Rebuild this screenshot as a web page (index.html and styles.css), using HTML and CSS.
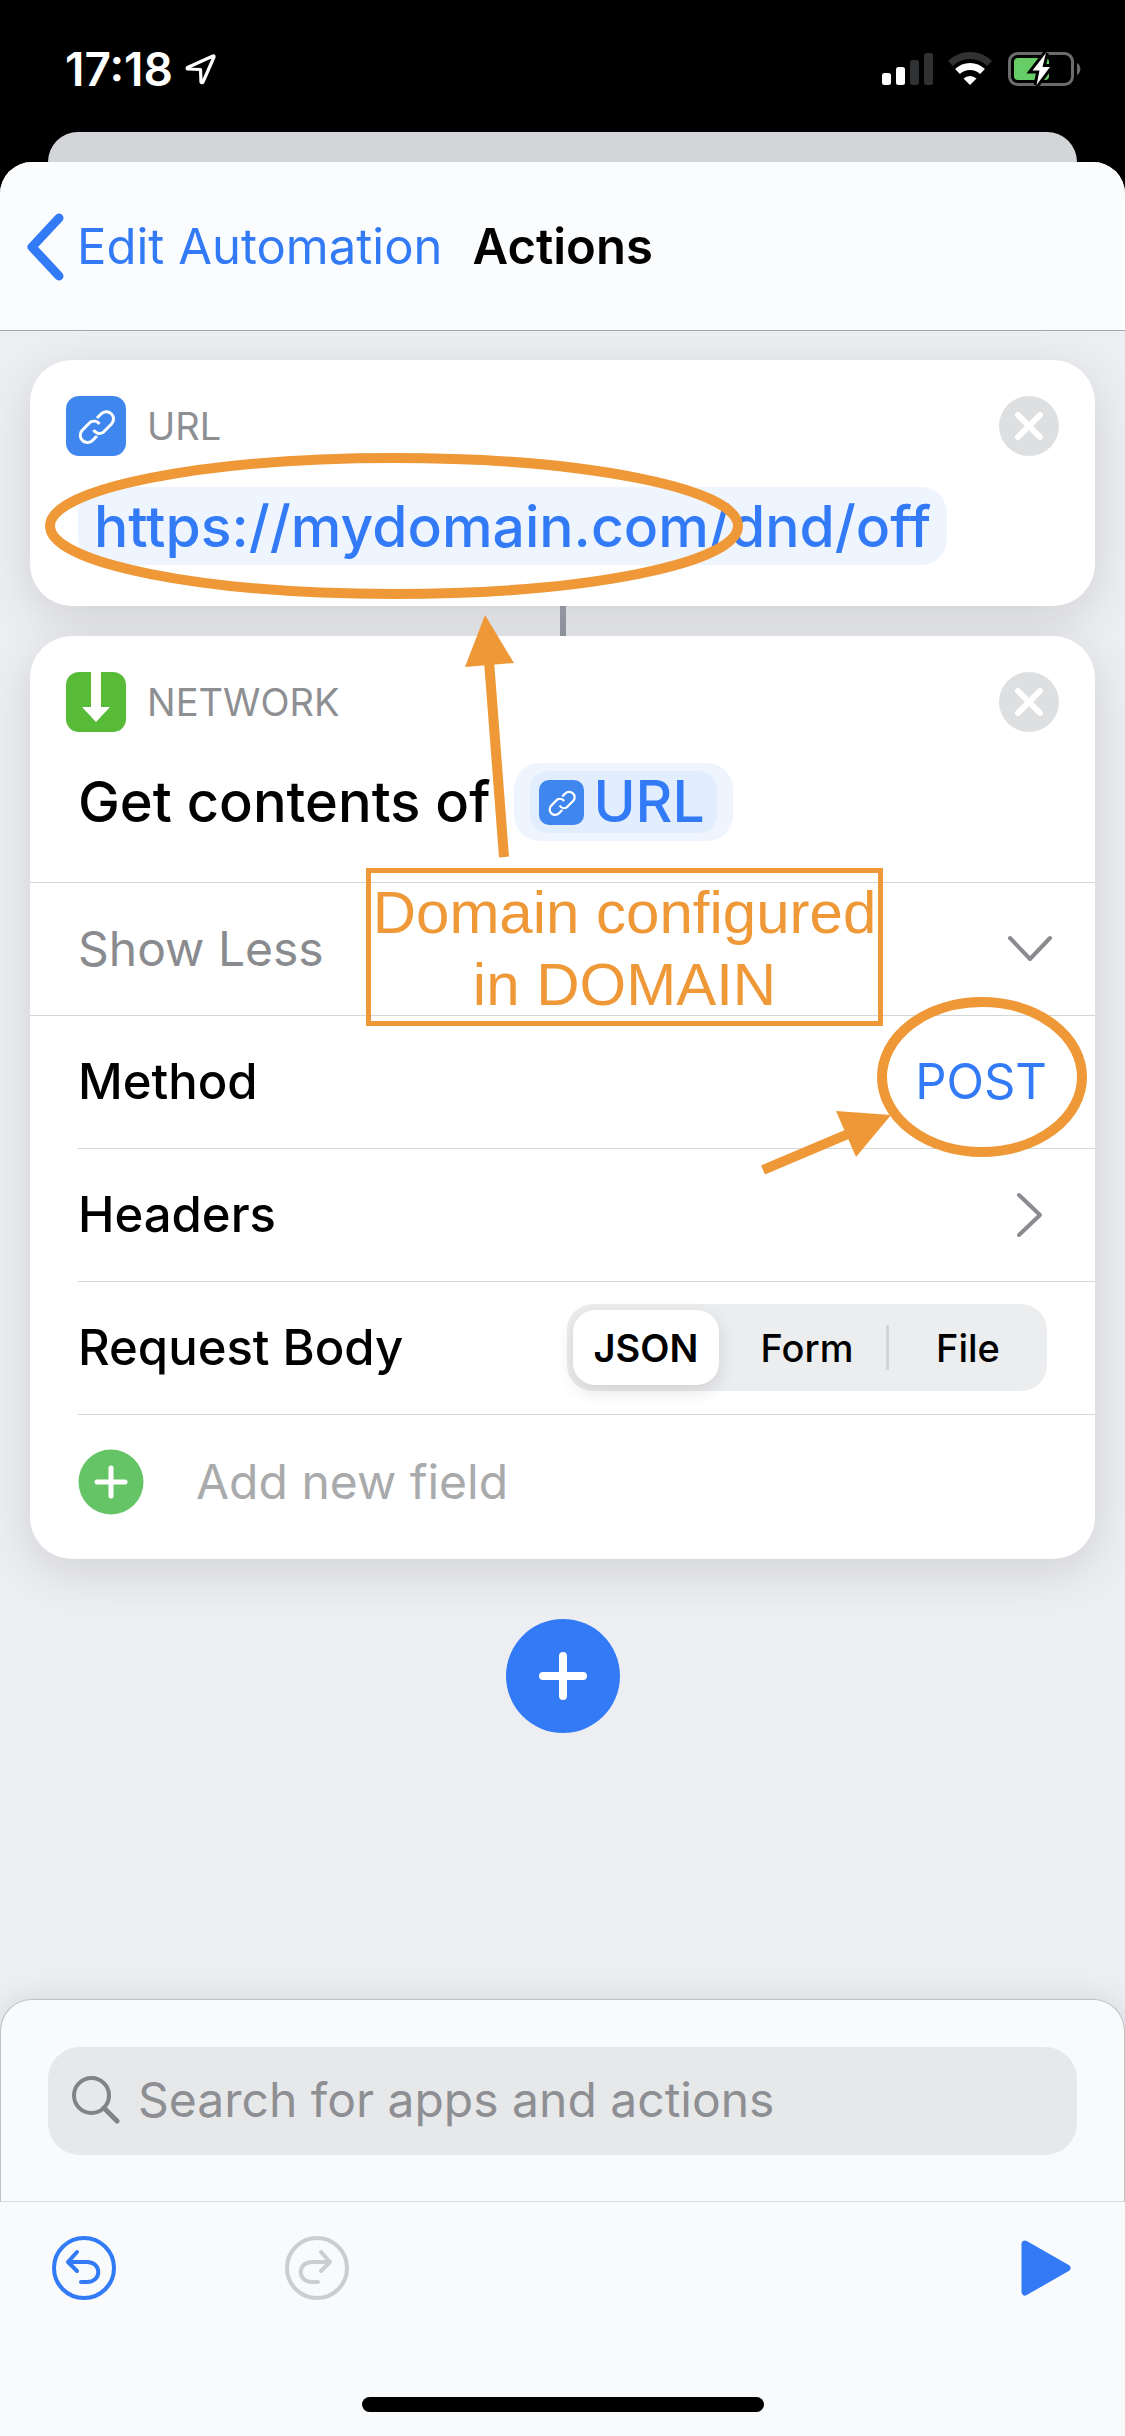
FILE: index.html
```html
<!DOCTYPE html>
<html lang="en">
<head>
<meta charset="utf-8">
<meta name="viewport" content="width=device-width, initial-scale=1">
<title>Actions</title>
<link rel="stylesheet" href="styles.css">
</head>
<body>
<svg class="defs" aria-hidden="true">
  <symbol id="link" viewBox="0 0 60 60">
    <g fill="none" stroke="#fff" stroke-width="3" stroke-linecap="butt">
      <path d="M31 22 L35 18 A7 7 0 0 1 45.500 28 L37 36.500 A7 7 0 0 1 27.500 34"/>
      <path d="M31 40 L27 44 A7 7 0 0 1 16 34.500 L24.500 26 A7 7 0 0 1 33.500 28"/>
    </g>
  </symbol>
  <symbol id="close" viewBox="0 0 60 60">
    <circle cx="30" cy="30" r="30" fill="#dedfe1"/>
    <path d="M19 19 L41 41 M41 19 L19 41" stroke="#fff" stroke-width="6" stroke-linecap="round"/>
  </symbol>
</svg>

<div class="status">
  <div class="status-left">
    <time>17:18</time>
    <svg width="32" height="32" viewBox="0 0 32 32" aria-hidden="true"><path d="M28 3 L2.500 14.500 Q1.500 16 3 16 L15.500 16.500 L16 29 Q17 30.500 18 29 L29 4 Q29.300 2.800 28 3 Z" fill="none" stroke="#fff" stroke-width="3.200" stroke-linejoin="round"/></svg>
  </div>
  <svg width="202" height="36" viewBox="0 0 202 36" role="img" aria-label="Signal, Wi-Fi and battery">
    <rect x="1" y="22" width="9" height="12" rx="2.500" fill="#fff"/>
    <rect x="15" y="16" width="9" height="18" rx="2.500" fill="#fff"/>
    <rect x="29" y="9" width="9" height="25" rx="2.500" fill="#303133"/>
    <rect x="43" y="2" width="9" height="32" rx="2.500" fill="#303133"/>
    <path d="M69.500 12.500 A28 28 0 0 1 108.500 12.500" fill="none" stroke="#303133" stroke-width="7"/>
    <path d="M76.500 20.500 A18 18 0 0 1 101.500 20.500" fill="none" stroke="#fff" stroke-width="7"/>
    <path d="M82.500 27.500 A9.500 9.500 0 0 1 95.500 27.500 L89 34 Z" fill="#fff"/>
    <rect x="128.500" y="2.500" width="63" height="31" rx="8" fill="none" stroke="#6c6c6e" stroke-width="3"/>
    <path d="M196 12 A7 7 0 0 1 196 24 Z" fill="#6c6c6e"/>
    <rect x="133" y="7" width="35" height="22" rx="4" fill="#67ce67"/>
    <path d="M165 2 L151.500 19.500 L158.500 19.500 L155.500 34 L169 16 L161.500 16 Z" fill="#fff" stroke="#000" stroke-width="6" paint-order="stroke"/>
  </svg>
</div>
<div class="back-sheet"></div>

<div class="sheet">
  <header class="nav">
    <a class="back" href="#">
      <svg width="38" height="68" viewBox="0 0 38 68" aria-hidden="true"><path d="M33 5 L6 34 L33 63" fill="none" stroke="#337af7" stroke-width="9" stroke-linecap="round" stroke-linejoin="round"/></svg>
      Edit Automation
    </a>
    <h1>Actions</h1>
  </header>

  <main class="flow">
    <section class="card">
      <div class="card-head">
        <svg class="app url-app" viewBox="0 0 60 60" aria-hidden="true"><use href="#link"/></svg>
        <h2>URL</h2>
        <button class="close" aria-label="Remove URL"><svg viewBox="0 0 60 60"><use href="#close"/></svg></button>
      </div>
      <div class="phrase"><span class="token">https://mydomain.com/dnd/off</span></div>
    </section>
    <div class="connector"></div>
    <section class="card">
      <div class="card-head">
        <svg class="app net-app" viewBox="0 0 60 60" aria-hidden="true"><path d="M25 0 H35 V35 H44 L30 50 L16 35 H25 Z" fill="#fff"/></svg>
        <h2>NETWORK</h2>
        <button class="close" aria-label="Remove network action"><svg viewBox="0 0 60 60"><use href="#close"/></svg></button>
      </div>
      <div class="phrase">Get contents of
        <span class="token outer"><span class="variable"><svg class="mini" viewBox="0 0 60 60" aria-hidden="true"><use href="#link"/></svg>URL</span></span>
      </div>
      <button class="row edge muted">Show Less
        <svg width="46" height="28" viewBox="0 0 46 28" aria-hidden="true"><path d="M3 3 L23 24 L43 3" fill="none" stroke="#8a8b8f" stroke-width="4" stroke-linecap="round" stroke-linejoin="round"/></svg>
      </button>
      <div class="row edge"><span>Method</span><button class="value">POST</button></div>
      <a class="row" href="#">Headers
        <svg class="disclosure" width="28" height="46" viewBox="0 0 28 46" aria-hidden="true"><path d="M3 3 L24 23 L3 43" fill="none" stroke="#8a8b8f" stroke-width="4" stroke-linecap="round" stroke-linejoin="round"/></svg>
      </a>
      <div class="row" role="radiogroup" aria-labelledby="body-type">
        <span id="body-type">Request Body</span>
        <div class="segments">
          <label><input type="radio" name="body" checked><span>JSON</span></label>
          <label><input type="radio" name="body"><span>Form</span></label>
          <label class="divided"><input type="radio" name="body"><span>File</span></label>
        </div>
      </div>
      <button class="row add-field">
        <svg width="66" height="66" viewBox="0 0 66 66" aria-hidden="true"><circle cx="33" cy="33" r="32.500" fill="#65c466"/><path d="M33 19 V47 M19 33 H47" stroke="#fff" stroke-width="5" stroke-linecap="round"/></svg>
        Add new field
      </button>
    </section>
    <button class="add" aria-label="Add action">
      <svg width="114" height="114" viewBox="0 0 114 114"><circle cx="57" cy="57" r="57" fill="#337af7"/><path d="M57 37 V77 M37 57 H77" stroke="#fff" stroke-width="8" stroke-linecap="round"/></svg>
    </button>

    <svg class="note-art note-url" width="760" height="540" viewBox="0 0 760 540" aria-hidden="true">
      <ellipse cx="394" cy="195" rx="344" ry="68" fill="none" stroke="#ef9837" stroke-width="10"/>
      <path d="M504 526 L489 330" stroke="#ef9837" stroke-width="10"/>
      <path d="M485 284 L514 332 L465 336 Z" fill="#ef9837"/>
    </svg>
    <p class="note">Domain configured<br>in DOMAIN</p>
    <svg class="note-art note-post" width="365" height="190" viewBox="0 0 365 190" aria-hidden="true">
      <ellipse cx="222" cy="86" rx="100" ry="75" fill="none" stroke="#ef9837" stroke-width="10"/>
      <path d="M3 179 L88 143" stroke="#ef9837" stroke-width="10"/>
      <path d="M131 124 L76 120 L96 166 Z" fill="#ef9837"/>
    </svg>
  </main>

  <footer>
    <form class="search-panel">
      <label class="search">
        <svg width="48" height="50" viewBox="0 0 48 50" aria-hidden="true"><circle cx="19.500" cy="20.500" r="17.500" fill="none" stroke="#828387" stroke-width="4"/><path d="M32 33 L45 46" stroke="#828387" stroke-width="5" stroke-linecap="round"/></svg>
        <input type="search" placeholder="Search for apps and actions" aria-label="Search for apps and actions">
      </label>
    </form>
    <div class="toolbar">
      <button aria-label="Undo"><svg width="66" height="66" viewBox="0 0 66 66"><g fill="none" stroke="#337af7" stroke-width="4" stroke-linecap="round" stroke-linejoin="round"><circle cx="33" cy="33" r="30"/><path d="M26 17 L17 27 L26 36 M17 27 H36 C51 27 51 47 36 47 H30"/></g></svg></button>
      <button aria-label="Redo" disabled><svg width="66" height="66" viewBox="0 0 66 66"><g fill="none" stroke="#cccdcf" stroke-width="4" stroke-linecap="round" stroke-linejoin="round"><circle cx="33" cy="33" r="30"/><path d="M37 17 L46 27 L37 36 M46 27 H28 C13 27 13 47 28 47 H34"/></g></svg></button>
      <button class="play" aria-label="Run"><svg width="50" height="56" viewBox="0 0 50 56"><path d="M4 4 L46 28 L4 52 Z" fill="#337af7" stroke="#337af7" stroke-width="7" stroke-linejoin="round"/></svg></button>
    </div>
    <div class="home"></div>
  </footer>
</div>
</body>
</html>
```
FILE: styles.css
```css
* { box-sizing: border-box; }

body {
  margin: 0;
  min-height: 100vh;
  display: flex;
  flex-direction: column;
  background: #000;
  color: #000;
  font-family: Inter, "Liberation Sans", sans-serif;
  font-size: 49px;
  line-height: 60px;
}

h1, h2, p { margin: 0; font-size: inherit; font-weight: inherit; }
a { color: inherit; text-decoration: none; }
svg { display: block; flex: none; }

button {
  margin: 0;
  padding: 0;
  border: 0;
  background: none;
  color: inherit;
  font: inherit;
  text-align: left;
}

.defs { position: absolute; width: 0; height: 0; }

.status {
  height: 132px;
  padding: 6px 42px 0 65px;
  display: flex;
  align-items: center;
  justify-content: space-between;
  color: #fff;
}
.status-left { display: flex; align-items: center; gap: 12px; font-size: 46px; font-weight: 600; }

.back-sheet {
  height: 60px;
  margin: 0 48px -30px;
  border-radius: 30px 30px 0 0;
  background: #d4d5d9;
}

.sheet {
  position: relative;
  flex: 1;
  display: flex;
  flex-direction: column;
  overflow: hidden;
  border-radius: 32px 32px 0 0;
  background: #edeef2;
}

.nav {
  height: 169px;
  padding: 2px 26px 0;
  display: flex;
  align-items: center;
  gap: 30px;
  border-bottom: 1px solid #a5a7ab;
  background: #fbfcfe;
}
.back { display: flex; align-items: center; gap: 13px; color: #337af7; }
.nav h1 { font-weight: 600; }

.flow {
  position: relative;
  flex: 1;
  display: flex;
  flex-direction: column;
  padding: 29px 30px 60px;
}

.card {
  border-radius: 42px;
  background: #fff;
  box-shadow: 0 12px 48px rgba(0, 0, 0, 0.12);
}

.card-head { display: flex; align-items: center; gap: 21px; padding: 36px 36px 0; }
.card-head h2 { flex: 1; color: #8e8f93; font-size: 38px; }
.app { width: 60px; height: 60px; border-radius: 13px; }
.url-app, .mini { background: #3f86ee; }
.net-app { background: #57bb38; }
.close svg { width: 60px; height: 60px; }

.phrase {
  display: flex;
  align-items: center;
  gap: 24px;
  padding: 31px 48px 41px;
  font-size: 56px;
  font-weight: 500;
}
.token {
  padding: 10px 16px 8px;
  border-radius: 26px;
  background: #eef5fe;
  color: #337af7;
  font-size: 57px;
}
.token.outer { padding: 8px 16px; }
.variable {
  display: flex;
  align-items: center;
  gap: 9px;
  padding: 1px 12px 1px 9px;
  border-radius: 18px;
  background: #e2eefd;
}
.mini { width: 45px; height: 45px; border-radius: 10px; }

.connector { width: 6px; height: 30px; margin: 0 auto; background: #9196a0; }

.row {
  position: relative;
  display: flex;
  align-items: center;
  justify-content: space-between;
  width: 100%;
  height: 133px;
  padding: 0 42px 0 48px;
  font-weight: 500;
}
.row::before {
  content: "";
  position: absolute;
  top: 0;
  left: 48px;
  right: 0;
  height: 1px;
  background: #d5d6d8;
}
.row.edge::before { left: 0; }
.row.muted { color: #8a8b8f; font-size: 48px; font-weight: 400; }
.row .value { color: #337af7; font-weight: 400; padding-right: 6px; }
.disclosure { margin-right: 9px; }

.segments {
  display: grid;
  grid-template-columns: repeat(3, 158px);
  gap: 3px;
  height: 87px;
  margin-right: 6px;
  border-radius: 26px;
  background: #ecedef;
  font-size: 38px;
}
.segments label { position: relative; display: grid; padding: 6px; }
.segments input { position: absolute; opacity: 0; }
.segments span { display: grid; place-items: center; border-radius: 22px; }
.segments input:checked + span {
  background: #fff;
  font-weight: 600;
  box-shadow: 0 6px 18px rgba(0, 0, 0, 0.12);
}
.segments .divided::before {
  content: "";
  position: absolute;
  top: 21px;
  bottom: 21px;
  left: -3px;
  width: 3px;
  background: #d3d4d7;
}

.row.add-field {
  justify-content: flex-start;
  gap: 52px;
  height: 145px;
  padding-bottom: 9px;
  color: #a9aaac;
  font-size: 48px;
  font-weight: 400;
}

.add { align-self: center; margin-top: 60px; }

.note-art, .note { position: absolute; pointer-events: none; }
.note-url { top: 0; left: 0; }
.note {
  top: 537px;
  left: 366px;
  width: 517px;
  height: 158px;
  padding-top: 4px;
  border: 5px solid #ef9837;
  color: #ef9837;
  font: 60px/72px "Liberation Sans", Arial, sans-serif;
  text-align: center;
  white-space: nowrap;
}
.note-post { top: 660px; right: 0; }

.search-panel {
  padding: 47px 47px 46px;
  border: 1px solid #bfc0c4;
  border-bottom-color: #d9dadd;
  border-radius: 32px 32px 0 0;
  background: #f9fafc;
  box-shadow: 0 0 30px rgba(0, 0, 0, 0.1);
}
.search {
  display: flex;
  align-items: center;
  gap: 18px;
  height: 108px;
  padding: 0 24px 2px;
  border-radius: 32px;
  background: #e7e8ea;
}
.search input {
  flex: 1;
  min-width: 0;
  padding: 0;
  border: 0;
  outline: 0;
  background: none;
  color: #000;
  font: inherit;
  font-size: 48px;
}
.search input::placeholder { color: #8e8f93; opacity: 1; }

.toolbar {
  position: relative;
  display: flex;
  align-items: center;
  gap: 167px;
  padding: 33px 54px 0 51px;
  background: #f9fafc;
}
.play { margin-left: auto; }

.home {
  padding: 96px 0 24px;
  background: #f9fafc;
}
.home::before {
  content: "";
  display: block;
  width: 402px;
  height: 15px;
  margin: 0 auto;
  border-radius: 8px;
  background: #000;
}
```
